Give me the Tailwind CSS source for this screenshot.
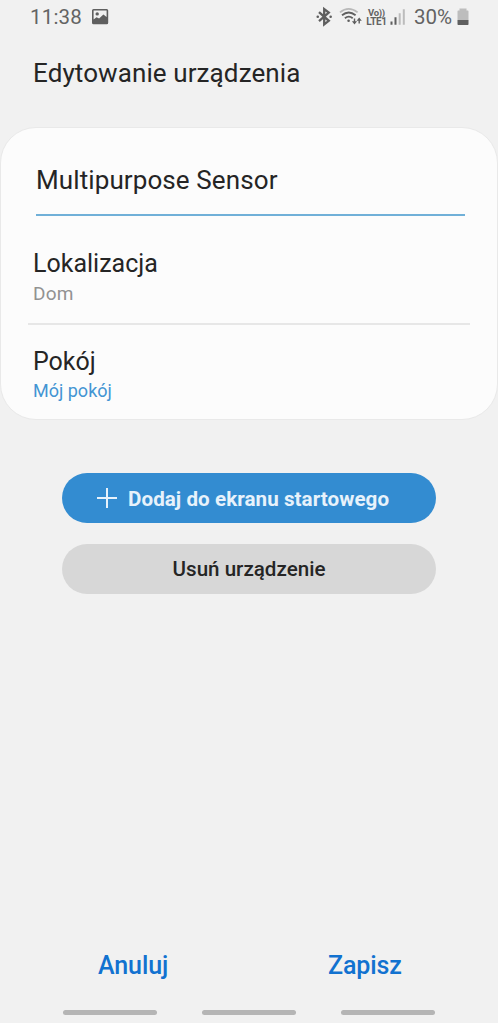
<!DOCTYPE html>
<html lang="pl">
<head>
<meta charset="utf-8">
<title>Edytowanie urządzenia</title>
<script src="https://cdn.jsdelivr.net/npm/@tailwindcss/browser@4"></script>
</head>
<body class="flex h-[1023px] w-[498px] flex-col overflow-hidden bg-[#f1f1f1] font-['Roboto',sans-serif] whitespace-nowrap text-[#252525]">
  <header class="flex h-[34px] shrink-0 items-center pl-[30px] text-[#636363]">
    <span class="w-[62px] text-[20.5px] leading-[34px] tracking-[0.2px]">11:38</span>
    <svg class="h-[34px] w-[17px]" viewBox="92 0 17 34"><path fill="#5f5f5f" fill-rule="evenodd" d="M93.5 9h13.2a1.5 1.5 0 0 1 1.5 1.5v12.2a1.5 1.5 0 0 1-1.5 1.5H93.5a1.5 1.5 0 0 1-1.5-1.5V10.500a1.500 1.500 0 0 1 1.500-1.500zM93.600 10.600v8.800l2.900-2.200 2.600 1.300 4.300-4 3.200 2.400v-6.300z"/><circle cx="97.200" cy="13.900" r="1.700" fill="#5f5f5f"/></svg>
    <svg class="ml-[207px] h-[34px] w-[46px]" viewBox="316 0 46 34" fill="none" stroke="#5f5f5f">
      <path stroke-width="2.300" d="M319 12.200l9.800 8.600-4.600 3.600V9l4.600 3.600-9.800 8.600"/>
      <path stroke-width="2.500" stroke-linecap="round" d="M317.700 16.700h.1M330.600 16.700h.1"/>
      <path stroke="#b9b9b9" stroke-width="1.800" d="M340 12.400q8.500-7 17.600 0"/>
      <path stroke-width="1.800" d="M342 15.300q6.700-5.600 13.600 0M344.900 18.300q3.900-3.400 7.800 0"/>
      <circle cx="348.600" cy="20.700" r="1.300" fill="#5f5f5f" stroke="none"/>
      <path stroke-width="1.400" d="M354.500 18.500v4M359.200 23.500v-4"/>
      <path fill="#5f5f5f" stroke="none" d="M351.900 21.200h5.200l-2.600 3.200zM356.600 20.700h5.200l-2.600-3.200z"/>
    </svg>
    <div class="ml-[3px] flex w-[23px] flex-col items-center font-bold">
      <span class="text-[9.5px] leading-[9px] tracking-[-0.3px]">Vo))</span>
      <span class="text-[10px] leading-[9px] tracking-[-0.4px]">LTE1</span>
    </div>
    <svg class="ml-[2px] h-[34px] w-[16px]" viewBox="390 0 16 34"><path fill="#5f5f5f" d="M390.500 21.500h2v3.300h-2zM394.500 17.300h2v7.500h-2z"/><path fill="#bcbcbc" d="M398.700 13.300h2v11.500h-2zM402.800 9.300h2v15.500h-2z"/></svg>
    <span class="ml-[8px] w-[43px] text-[20.5px] leading-[34px]">30%</span>
    <svg class="h-[34px] w-[12px]" viewBox="457 0 12 34"><path fill="#bdbdbd" d="M459.500 8.500h7v2h1.300a.7.7 0 0 1 .7.700v9h-11v-9a.7.7 0 0 1 .7-.7h1.300z"/><path fill="#5f5f5f" d="M457.500 20h11v4.200a.7.7 0 0 1-.7.700h-9.600a.7.7 0 0 1-.7-.7z"/></svg>
  </header>

  <h1 class="h-[93px] shrink-0 pt-[19px] pl-[33px] text-[26px] leading-[40px] tracking-[0.1px]">Edytowanie urządzenia</h1>

  <main class="h-[293px] shrink-0 rounded-[36px] border border-[#e9e9e9] bg-[#fcfcfc]">
    <div class="mr-[32px] ml-[35px] h-[88px] border-b-2 border-[#70b0d8] pt-[32px] text-[26px] leading-[40px] tracking-[0.1px]">Multipurpose Sensor</div>
    <section class="mr-[27px] ml-[27px] h-[109px] border-b-2 border-[#e7e7e7] pt-[33px] pl-[5px]">
      <h2 class="text-[25px] leading-[30px]">Lokalizacja</h2>
      <p class="text-[19px] leading-[30px] tracking-[0.2px] text-[#929292]">Dom</p>
    </section>
    <section class="pt-[22px] pl-[32px]">
      <h2 class="text-[25px] leading-[30px]">Pokój</h2>
      <p class="text-[18px] leading-[27px] text-[#4395d3]">Mój pokój</p>
    </section>
  </main>

  <div class="mx-[62px] mt-[53px] flex shrink-0 flex-col gap-[21px] text-[20.6px]">
    <button class="flex h-[50px] items-center rounded-full bg-[#338cd1] pl-[35px] font-bold text-[#e7f2fb]">
      <svg class="mr-[11px] size-[20px]" viewBox="0 0 20 20"><path stroke="#e7f2fb" stroke-width="2" d="M10 0v20M0 10h20"/></svg>
      <span class="pt-px leading-[50px] tracking-[0.06px]">Dodaj do ekranu startowego</span>
    </button>
    <button class="h-[50px] rounded-full bg-[#d7d7d7] leading-[50px] font-medium">Usuń urządzenie</button>
  </div>

  <footer class="mt-auto shrink-0">
    <div class="flex pl-[98px] text-[25px] leading-[40px] font-medium tracking-[-0.1px] text-[#1272d0]">
      <button class="w-[230px] text-left">Anuluj</button>
      <button>Zapisz</button>
    </div>
    <nav class="mt-[24px] mb-[8px] flex gap-[45px] pl-[63px]">
      <i class="h-[5px] w-[94px] rounded-full bg-[#b5b5b5]"></i>
      <i class="h-[5px] w-[94px] rounded-full bg-[#b5b5b5]"></i>
      <i class="h-[5px] w-[94px] rounded-full bg-[#b5b5b5]"></i>
    </nav>
  </footer>
</body>
</html>
